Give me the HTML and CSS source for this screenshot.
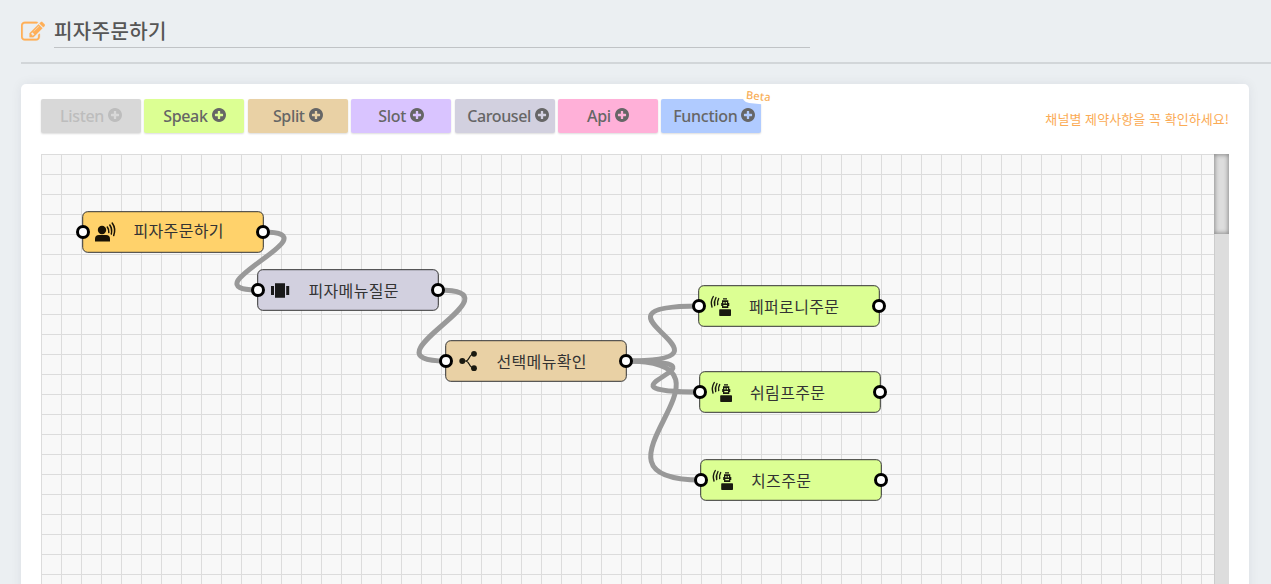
FILE: index.html
```
<!DOCTYPE html>
<html lang="ko">
<head>
<meta charset="utf-8">
<title>피자주문하기</title>
<link rel="stylesheet" href="styles.css">
</head>
<body>
<svg class="defs" width="0" height="0" aria-hidden="true">
  <symbol id="plus" viewBox="0 0 1536 1536"><path d="M1216 832v-128q0-26-19-45t-45-19h-256v-256q0-26-19-45t-45-19h-128q-26 0-45 19t-19 45v256h-256q-26 0-45 19t-19 45v128q0 26 19 45t45 19h256v256q0 26 19 45t45 19h128q26 0 45-19t19-45v-256h256q26 0 45-19t19-45zM1536 768q0 209-103 385.5t-279.500 279.500-385.500 103-385.500-103-279.500-279.500-103-385.500 103-385.500 279.500-279.500 385.500-103 385.500 103 279.500 279.500 103 385.500z"/></symbol>
  <symbol id="robot" viewBox="0 0 22 22" overflow="visible">
    <g fill="none" stroke="#191910" stroke-width="1.400" stroke-linecap="round">
      <path d="M2.800 1.500Q-.3 6.500 1.500 12M5.500 2.500Q3.200 6.500 4.200 10.500M8.200 3.500Q6.600 6.500 7.200 9.500"/>
    </g>
    <path fill="#191910" d="M12.500 3.200h4v1.300h-4zM11.500 5.300h6.300v7.700h-6.300zM10.700 8h1v3h-1zM17.800 8h1v3h-1z"/>
    <path fill="#dbff94" d="M12.800 7h1.300v1.500h-1.300zM15.200 7h1.300v1.500h-1.300zM12.800 10h3.700v1.200h-3.700z"/>
    <rect fill="#191910" x="8.700" y="14.200" width="11.800" height="6.800" rx=".8"/>
  </symbol>
</svg>
<header class="header">
  <svg class="edit" viewBox="0 0 1792 1792"><path d="M888 1184l116-116-152-152-116 116v56h96v96h56zm440-720q-16-16-33 1l-350 350q-17 17-1 33t33-1l350-350q17-17 1-33zm80 594v190q0 119-84.500 203.500t-203.500 84.500h-832q-119 0-203.500-84.500t-84.500-203.500v-832q0-119 84.500-203.500t203.500-84.500h832q63 0 117 25 15 7 18 23 3 17-9 29l-49 49q-14 14-32 8-23-6-45-6h-832q-66 0-113 47t-47 113v832q0 66 47 113t113 47h832q66 0 113-47t47-113v-126q0-13 9-22l64-64q15-15 35-7t20 29zm-96-738l288 288-672 672h-288v-288zm444 132l-92 92-288-288 92-92q28-28 68-28t68 28l152 152q28 28 28 68t-28 68z"/></svg>
  <h1 class="title">피자주문하기</h1>
</header>
<main class="panel">
  <div class="toolbar">
    <div class="buttons">
      <button class="btn listen"><span>Listen</span><svg><use href="#plus"/></svg></button>
      <button class="btn speak"><span>Speak</span><svg><use href="#plus"/></svg></button>
      <button class="btn split"><span>Split</span><svg><use href="#plus"/></svg></button>
      <button class="btn slot"><span>Slot</span><svg><use href="#plus"/></svg></button>
      <button class="btn carousel"><span>Carousel</span><svg><use href="#plus"/></svg></button>
      <button class="btn api"><span>Api</span><svg><use href="#plus"/></svg></button>
      <button class="btn function"><em class="beta">Beta</em><span>Function</span><svg><use href="#plus"/></svg></button>
    </div>
    <p class="notice">채널별 제약사항을 꼭 확인하세요!</p>
  </div>
  <div class="workspace">
    <svg class="canvas" viewBox="41 154 1173 440">
      <defs><pattern id="grid" x="41" y="154" width="20" height="20" patternUnits="userSpaceOnUse"><path class="grid-line" d="M0 .5H20M.5 0V20"/></pattern></defs>
      <rect x="41" y="154" width="1173" height="440" fill="url(#grid)"/>
      <g class="links">
        <path d="M263 232C338 232 183 290 258 290"/>
        <path d="M438 290C528 290 356 361 446 361"/>
        <path d="M626 361C756 361 569 306 699 306"/>
        <path d="M626 361C749 361 577 392 700 392"/>
        <path d="M626 361C761 361 566 480 701 480"/>
      </g>
      <g transform="translate(82.500 211.500)">
        <rect class="node intent" x=".2" y=".2" width="180.600" height="40.600" rx="5"/>
        <g fill="#191205"><circle cx="19.500" cy="18.500" r="4.200"/><path d="M12.500 30v-2.500q0-4 4-4h7q4 0 4 4V30z"/></g>
        <path class="waves" d="M24.800 15.500q1.800 2.500 1.500 5.500M27.300 13.500q2.700 4 1.500 9M29.700 11.500q4 5.500 1.500 12.500"/>
        <text x="51" y="25.800" textLength="90">피자주문하기</text>
        <circle class="port" cx=".5" cy="20.500" r="5.500"/><circle class="port" cx="180.500" cy="20.500" r="5.500"/>
      </g>
      <g transform="translate(257.500 269.500)">
        <rect class="node card" x=".2" y=".2" width="180.600" height="40.600" rx="5"/>
        <path fill="#191919" d="M17.500 13.800h10v14.400h-10zM13.500 16.500h3v9h-3zM28.700 16.500h3v9h-3z"/>
        <text x="51" y="27.800" textLength="90">피자메뉴질문</text>
        <circle class="port" cx=".5" cy="20.500" r="5.500"/><circle class="port" cx="180.500" cy="20.500" r="5.500"/>
      </g>
      <g transform="translate(445.500 340.500)">
        <rect class="node branch" x=".2" y=".2" width="180.600" height="40.600" rx="5"/>
        <path class="fork" d="M16.500 20.500H20C24.500 20.500 23 13.500 28.500 13.500M20 20.500C24.500 20.500 23 27.500 28.500 27.500"/>
        <g fill="#191910"><circle cx="16.800" cy="20.500" r="3"/><circle cx="28.500" cy="13.300" r="2.900"/><circle cx="28.500" cy="27.700" r="2.900"/></g>
        <text x="51" y="27.800" textLength="90">선택메뉴확인</text>
        <circle class="port" cx=".5" cy="20.500" r="5.500"/><circle class="port" cx="180.500" cy="20.500" r="5.500"/>
      </g>
      <g transform="translate(698.500 285.500)">
        <rect class="node reply" x=".2" y=".2" width="180.600" height="40.600" rx="5"/>
        <use href="#robot" x="12" y="9.500" width="22" height="22"/>
        <text x="50.500" y="27.800" textLength="90">페퍼로니주문</text>
        <circle class="port" cx=".5" cy="20.500" r="5.500"/><circle class="port" cx="180.500" cy="20.500" r="5.500"/>
      </g>
      <g transform="translate(699.500 371.500)">
        <rect class="node reply" x=".2" y=".2" width="180.600" height="40.600" rx="5"/>
        <use href="#robot" x="12" y="9.500" width="22" height="22"/>
        <text x="50.500" y="27.800" textLength="75">쉬림프주문</text>
        <circle class="port" cx=".5" cy="20.500" r="5.500"/><circle class="port" cx="180.500" cy="20.500" r="5.500"/>
      </g>
      <g transform="translate(700.500 459.500)">
        <rect class="node reply" x=".2" y=".2" width="180.600" height="40.600" rx="5"/>
        <use href="#robot" x="12" y="9.500" width="22" height="22"/>
        <text x="50.500" y="27.800" textLength="60">치즈주문</text>
        <circle class="port" cx=".5" cy="20.500" r="5.500"/><circle class="port" cx="180.500" cy="20.500" r="5.500"/>
      </g>
    </svg>
    <div class="scrollbar"><div class="thumb"></div></div>
  </div>
</main>
</body>
</html>
```

FILE: styles.css
```
* { box-sizing: border-box; }
body {
  margin: 0;
  height: 584px;
  overflow: hidden;
  background: #ebeff2;
  font-family: "Noto Sans", "Noto Sans CJK KR", sans-serif;
  color: #565656;
}
.defs { display: block; height: 0; }
.header {
  display: flex;
  height: 64px;
  margin-left: 21px;
  padding-top: 15px;
  gap: 9px;
  border-bottom: 2px solid #d2d6d9;
}
.edit { width: 24px; height: 24px; margin-top: 5px; fill: #ffaf57; stroke: #ffaf57; stroke-width: 20; }
.title {
  width: 756px;
  height: 33px;
  margin: 0;
  border-bottom: 1px solid #c0c3c6;
  font: 500 20px/32px "Noto Sans CJK KR", sans-serif;
  letter-spacing: .4px;
}
.panel {
  width: 1228px;
  height: 520px;
  margin: 20px 0 0 21px;
  padding: 15px 20px 0;
  border-radius: 5px;
  background: #fff;
  box-shadow: 0 0 12px rgba(0, 30, 50, .07);
}
.toolbar { display: flex; justify-content: space-between; height: 55px; }
.buttons { display: flex; gap: 3.400px; }
.btn {
  position: relative;
  display: flex;
  justify-content: center;
  align-items: center;
  gap: 4px;
  width: 100px;
  height: 34px;
  padding: 0;
  border: 0;
  border-radius: 2px;
  box-shadow: 0 1px 2px rgba(0, 0, 0, .14);
  color: #666;
  font: 500 16px/34px "Noto Sans", sans-serif;
  letter-spacing: -.35px;
}
.btn > svg { position: relative; width: 14px; height: 14px; fill: currentColor; margin-top: -2px; }
.btn > span { position: relative; }
.listen { background: #d8d8d8; color: #bdbdbd; }
.speak { background: #dcff93; }
.split { background: #e9d1a5; }
.slot { background: #d9c4ff; }
.carousel { padding-left: 7px; background: #d2d0df; letter-spacing: -.4px; }
.api { background: #ffb0d8; }
.function { padding-left: 6px; background: #b0cbff; letter-spacing: -.3px; }
.beta {
  position: absolute;
  top: -11px;
  right: -14px;
  width: 33px;
  height: 16px;
  border-radius: 8px;
  background: #fff;
  color: #f8ae58;
  font: 500 11px/16px "Noto Sans", sans-serif;
  letter-spacing: .2px;
  transform: rotate(6deg);
}
.notice {
  margin: 10px 0 0;
  color: #fbab55;
  font: 400 13px/20px "Noto Sans CJK KR", sans-serif;
  letter-spacing: .06px;
}
.workspace { display: flex; height: 440px; }
.canvas { display: block; width: 1173px; height: 440px; background: #f8f8f8; }
.grid-line { fill: none; stroke: #dcdcdc; shape-rendering: crispEdges; }
.links { fill: none; stroke: #999; stroke-width: 5; }
.node { stroke: #333; stroke-width: 1; }
.intent { fill: #ffd26b; }
.card { fill: #d2d0df; }
.branch { fill: #e9d1a5; }
.reply { fill: #dcff93; }
.port { fill: #fff; stroke: #000; stroke-width: 3; }
.waves { fill: none; stroke: #191205; stroke-width: 1.500; stroke-linecap: round; }
.fork { fill: none; stroke: #191910; stroke-width: 1.200; }
.canvas text { font: 400 16px "Noto Sans CJK KR", sans-serif; fill: #333; }
.scrollbar { width: 15px; background: #ddd; border-left: 1px solid #ccc; }
.thumb {
  width: 15px;
  height: 80px;
  margin-left: -1px;
  background: #ddd;
  box-shadow: inset 0 0 4px 1px rgba(0, 0, 0, .36);
}
```
